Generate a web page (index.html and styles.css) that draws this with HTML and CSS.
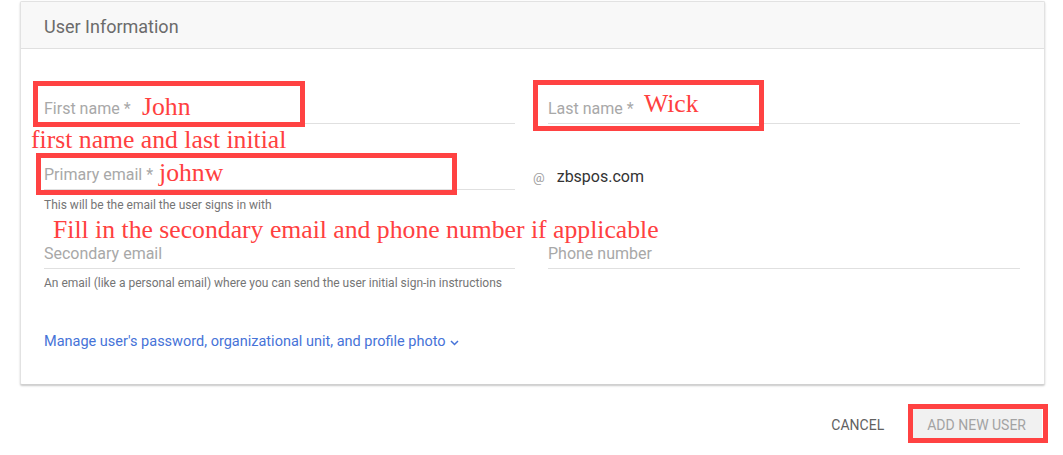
FILE: index.html
```html
<!DOCTYPE html>
<html lang="en">
<head>
<meta charset="utf-8">
<title>Add new user</title>
<link rel="stylesheet" href="styles.css">
</head>
<body>
<div class="page">
  <section class="card">
    <header class="card-head">User Information</header>
    <div class="card-body">
      <div class="row">
        <div class="cell"><div class="field">First name *</div></div>
        <div class="cell"><div class="field">Last name *</div></div>
      </div>
      <div class="row row-email">
        <div class="cell">
          <div class="field">Primary email *</div>
          <p class="hint">This will be the email the user signs in with</p>
        </div>
        <div class="cell domain"><span class="at">@</span><span class="domain-name">zbspos.com</span></div>
      </div>
      <div class="row row-secondary">
        <div class="cell">
          <div class="field">Secondary email</div>
          <p class="hint hint-tight">An email (like a personal email) where you can send the user initial sign-in instructions</p>
        </div>
        <div class="cell"><div class="field">Phone number</div></div>
      </div>
      <a class="more" href="#">Manage user's password, organizational unit, and profile photo<svg class="chev" width="9" height="6" viewBox="0 0 9 6"><path d="M1 1l3.5 3.5L8 1" fill="none" stroke="currentColor" stroke-width="1.5"/></svg></a>
    </div>
  </section>

  <div class="actions">
    <button class="btn">CANCEL</button>
    <button class="btn btn-primary">ADD NEW USER</button>
  </div>

  <!-- hand-drawn notes layered over the form -->
  <div class="note-box box-first"></div>
  <div class="note-box box-last"></div>
  <div class="note-box box-email"></div>
  <div class="note-box box-add"></div>
  <span class="note note-john">John</span>
  <span class="note note-wick">Wick</span>
  <span class="note note-initial">first name and last initial</span>
  <span class="note note-johnw">johnw</span>
  <span class="note note-fill">Fill in the secondary email and phone number if applicable</span>
</div>
</body>
</html>
```

FILE: styles.css
```css
* { box-sizing: border-box; }

html, body {
  margin: 0;
  background: #fff;
}

body {
  font-family: Roboto, "Noto Sans", Arial, sans-serif;
  color: #333;
}

.page {
  position: relative;
  width: 1063px;
  height: 455px;
  padding-top: 1px;
}

/* card */
.card {
  margin-left: 20px;
  width: 1025px;
  border: 1px solid #e2e2e2;
  border-bottom-color: #d0d0d0;
  border-radius: 2px;
  background: #fff;
  box-shadow: 0 1px 2px rgba(0, 0, 0, 0.22);
}

.card-head {
  height: 47px;
  padding: 4px 23px 0;
  line-height: 42px;
  font-size: 18px;
  color: #6b6b6b;
  background: #f8f8f8;
  border-bottom: 1px solid #e0e0e0;
}

.card-body {
  padding: 48px 24px 32px 23px;
}

.row {
  display: grid;
  grid-template-columns: 471px 472px;
  column-gap: 33px;
}

.row-email { margin-top: 39px; }
.row-secondary { margin-top: 29px; }

.field {
  height: 27px;
  padding-bottom: 2px;
  line-height: 24px;
  font-size: 16px;
  color: #a8a8a8;
  border-bottom: 1px solid #e0e0e0;
}

.hint {
  margin: 7px 0 0;
  font-size: 12px;
  line-height: 16px;
  color: #757575;
}

.hint-tight { margin-top: 6px; }

.domain {
  display: flex;
  align-items: baseline;
  margin-left: -15px;
  padding-top: 2px;
  line-height: 24px;
}

.at {
  font-size: 13px;
  color: #9e9e9e;
  margin-right: 12px;
}

.domain-name {
  font-size: 16px;
  color: #333;
}

.more {
  display: inline-flex;
  align-items: center;
  margin-top: 41px;
  line-height: 20px;
  font-size: 14.5px;
  color: #4673d8;
  text-decoration: none;
}

.chev {
  margin-left: 4px;
  margin-top: 2px;
}

/* footer actions */
.actions {
  display: flex;
  justify-content: flex-end;
  gap: 11px;
  margin-top: 22px;
  padding-right: 21px;
}

.btn {
  height: 36px;
  padding: 0 16px;
  border: 0;
  border-radius: 2px;
  background: transparent;
  font-family: Roboto, "Noto Sans", Arial, sans-serif;
  font-size: 14px;
  line-height: 36px;
  color: #616161;
}

.btn-primary {
  background: #f1f1f1;
  color: #a3a3a3;
}

/* red annotation layer */
.note-box {
  position: absolute;
  border: 5px solid #ff4242;
}

.box-first { left: 33px; top: 81px; width: 272px; height: 46px; }
.box-last { left: 533px; top: 80px; width: 231px; height: 51px; }
.box-email { left: 36px; top: 153px; width: 421px; height: 42px; }
.box-add { left: 908px; top: 404px; width: 140px; height: 39px; }

.note {
  position: absolute;
  font-family: "Liberation Serif", "Times New Roman", serif;
  font-size: 25.7px;
  line-height: 30px;
  color: #ff4040;
  white-space: nowrap;
}

/* baseline sits ~23px below the top of the 30px line */
.note-john { left: 142px; top: 92px; }
.note-wick { left: 644px; top: 89px; }
.note-initial { left: 31px; top: 125px; }
.note-johnw { left: 159px; top: 158px; }
.note-fill { left: 53px; top: 215px; }
```
